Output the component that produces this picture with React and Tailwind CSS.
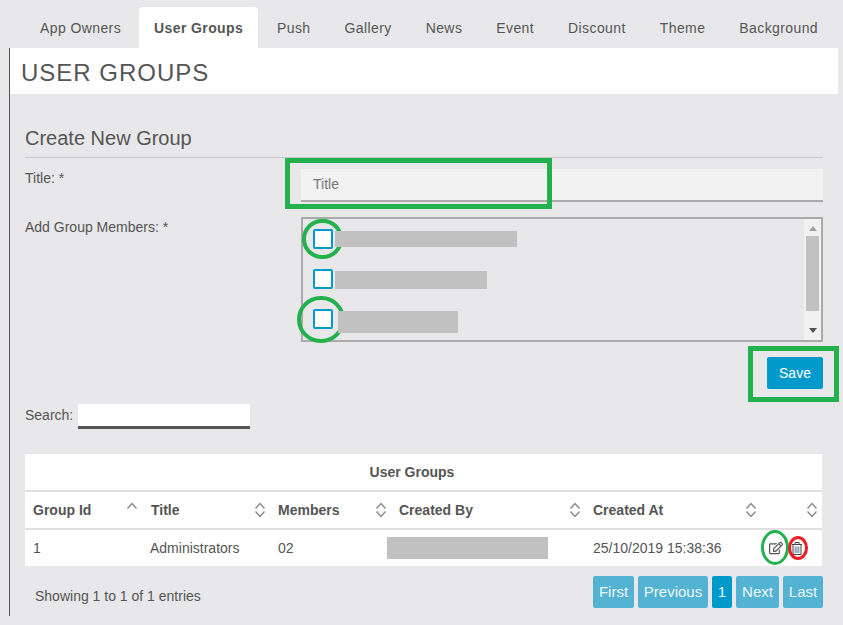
import { FaRegEdit } from "react-icons/fa"

const tabs = ["App Owners", "User Groups", "Push", "Gallery", "News", "Event", "Discount", "Theme", "Background"]

const members = [
  { bar: "ml-[2px] w-[182px] h-4" },
  { bar: "ml-[2px] mt-[2px] w-[152px] h-[18px]" },
  { bar: "ml-[5px] mt-[6px] w-[120px] h-[22px]" },
]

const columns = ["Group Id", "Title", "Members", "Created By", "Created At", ""]

const rowGrid = "grid grid-cols-[117px_128px_121px_194px_176px_61px]"

function SortIcon({ up }) {
  return (
    <svg width="12" height="16" viewBox="0 0 12 16" fill="none" stroke="#8a8a8a" strokeWidth="1.4" className="shrink-0">
      <path d="M1.5 6.5 L6 1.5 L10.5 6.5" />
      {!up && <path d="M1.5 9.5 L6 14.5 L10.5 9.5" />}
    </svg>
  )
}

function TrashIcon() {
  return (
    <svg width="10" height="13" viewBox="0 0 10 13" fill="none" stroke="#444" strokeWidth="1">
      <path d="M3 2.5 V0.5 H7 V2.5" />
      <path d="M0 2.5 H10" />
      <path d="M1 2.5 V12.5 H9 V2.5" />
      <path d="M3.2 4.5 V11 M5 4.5 V11 M6.8 4.5 V11" stroke="#5f7d9c" />
    </svg>
  )
}

function PageButton({ label, width, active }) {
  return (
    <button className={`h-8 rounded-[2px] text-[15px] text-[#eef8fb] ${width} ${active ? "bg-[#0099cc]" : "bg-[#52b3d3]"}`}>
      {label}
    </button>
  )
}

export default function App() {
  return (
    <div className="relative h-[625px] w-[843px] overflow-hidden bg-[#e8e8ea] font-['Liberation_Sans',Arial,sans-serif] text-sm text-[#555]">
      <div className="flex h-12 items-end gap-[4px] whitespace-nowrap pl-[25px]">
        {tabs.map((tab, i) =>
          tab === "User Groups" ? (
            <div key={tab} className="flex h-[41px] w-[119px] items-center rounded-t-[4px] bg-white pl-[15px] font-bold tracking-[0.4px]">
              {tab}
            </div>
          ) : (
            <div key={tab} className={`flex h-[41px] items-center tracking-[0.4px] ${i === 0 ? "w-[110px] pl-[15px]" : "px-[15px]"}`}>
              {tab}
            </div>
          )
        )}
      </div>

      <div className="ml-[9px] h-[568px] border-l border-[#555]">
        <div className="flex h-[46px] w-[828px] items-center bg-white pl-[11px] pt-1 text-2xl tracking-[1px]">USER GROUPS</div>

        <div className="w-[813px] pl-[15px]">
          <h2 className="mt-[31px] h-[33px] border-b border-[#c8c8c8] text-xl leading-[26px]">Create New Group</h2>

          <div className="mt-[11px] grid grid-cols-[276px_522px] gap-y-[15px]">
            <label className="leading-[18px]">Title: *</label>
            <div className="flex h-[33px] items-center border-b-2 border-[#aaa] bg-[#f2f2f2] pb-[2px] pl-3 text-[#777]">Title</div>

            <label className="leading-5">Add Group Members: *</label>
            <div className="flex h-[125px] border-2 border-[#aaa]">
              <div className="flex-1 pl-[10px] pt-[10px]">
                {members.map((m, i) => (
                  <div key={i} className="mb-5 flex h-5 items-center">
                    <span className="relative z-10 h-5 w-5 rounded-[2px] border-2 border-[#0099cc] bg-white" />
                    <span className={`relative z-10 bg-[#c1c1c1] ${m.bar}`} />
                  </div>
                ))}
              </div>
              <div className="flex w-[17px] flex-col items-center bg-[#f1f1f1] pt-[7px]">
                <svg width="8" height="5" viewBox="0 0 8 5" fill="#a3a3a3"><path d="M4 0 L8 5 L0 5 Z" /></svg>
                <div className="mt-[5px] h-[75px] w-[13px] bg-[#c1c1c1]" />
                <svg className="mt-[17px]" width="8" height="5" viewBox="0 0 8 5" fill="#505050"><path d="M0 0 L8 0 L4 5 Z" /></svg>
              </div>
            </div>
          </div>

          <div className="mt-[15px] flex justify-end">
            <button className="h-8 w-14 rounded-[2px] bg-[#0099cc] text-sm text-white">Save</button>
          </div>

          <div className="mt-[15px] flex items-start gap-[5px]">
            <span className="leading-[22px]">Search:</span>
            <div className="h-[25px] w-[172px] border-b-[3px] border-[#555] bg-white" />
          </div>

          <div className="mt-[25px] w-[797px] bg-white">
            <div className="flex h-9 items-center justify-center pr-[23px] font-bold">User Groups</div>
            <div className={`${rowGrid} h-[40px] items-center border-y-2 border-[#e0e0e0] font-bold`}>
              {columns.map((col, i) => (
                <div key={i} className={`flex items-center justify-between pr-1 ${i === 1 ? "pl-[9px]" : "pl-2"}`}>
                  <span>{col}</span>
                  <SortIcon up={i === 0} />
                </div>
              ))}
            </div>
            <div className={`${rowGrid} h-9 items-center`}>
              <div className="pl-2">1</div>
              <div className="pl-2">Administrators</div>
              <div className="pl-2">02</div>
              <div><div className="-ml-1 h-[22px] w-[161px] bg-[#c1c1c1]" /></div>
              <div className="pl-2">25/10/2019 15:38:36</div>
              <div className="flex items-center gap-[9px] pl-[8px]">
                <FaRegEdit size={14} />
                <TrashIcon />
              </div>
            </div>
          </div>

          <div className="mt-[10px] flex items-center justify-between pl-[10px]">
            <span className="mt-2">Showing 1 to 1 of 1 entries</span>
            <div className="flex gap-1">
              <PageButton label="First" width="w-[41px]" />
              <PageButton label="Previous" width="w-[70px]" />
              <PageButton label="1" width="w-5" active />
              <PageButton label="Next" width="w-[43px]" />
              <PageButton label="Last" width="w-10" />
            </div>
          </div>
        </div>
      </div>

      {/* annotations drawn over the screenshot */}
      <div className="absolute left-[285px] top-[158px] h-[51px] w-[267px] border-[5px] border-[#22b14c]" />
      <div className="absolute left-[302px] top-[219px] h-10 w-[41px] rounded-full border-4 border-[#22b14c]" />
      <div className="absolute left-[297px] top-[296px] h-[47px] w-[48px] rounded-full border-4 border-[#22b14c]" />
      <div className="absolute left-[748px] top-[346px] h-[56px] w-[91px] border-[5px] border-[#22b14c]" />
      <div className="absolute left-[761px] top-[530px] h-[35px] w-[28px] rounded-[50%] border-[3px] border-[#22b14c]" />
      <div className="absolute left-[788px] top-[536px] h-6 w-5 rounded-[50%] border-[3px] border-[#ed1c24]" />
    </div>
  )
}
